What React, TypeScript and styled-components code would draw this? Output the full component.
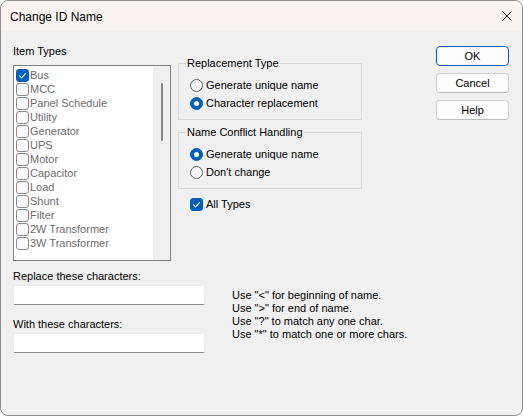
import React from "react";
import styled, { createGlobalStyle } from "styled-components";

const GlobalStyle = createGlobalStyle`
  html, body {
    margin: 0;
    padding: 0;
    background: #ffffff;
  }
  body {
    font-family: "Liberation Sans", Arial, sans-serif;
    font-size: 11px;
    color: #000;
  }
`;

const itemTypes = [
  "Bus",
  "MCC",
  "Panel Schedule",
  "Utility",
  "Generator",
  "UPS",
  "Motor",
  "Capacitor",
  "Load",
  "Shunt",
  "Filter",
  "2W Transformer",
  "3W Transformer",
];

const hints = [
  'Use "<" for beginning of name.',
  'Use ">" for end of name.',
  'Use "?" to match any one char.',
  'Use "*" to match one or more chars.',
];

function App() {
  return (
    <>
      <GlobalStyle />
      <Window>
        <TitleBar>
          <Title>Change ID Name</Title>
          <CloseIcon width="10" height="10" viewBox="0 0 10 10">
            <path d="M0.5 0.5 L9.5 9.5 M9.5 0.5 L0.5 9.5" stroke="#1a1a1a" strokeWidth="1" />
          </CloseIcon>
        </TitleBar>

        <Body>
          <TopRow>
            <LeftColumn>
              <FieldLabel>Item Types</FieldLabel>
              <ListBox>
                <ListItems>
                  {itemTypes.map((name, i) => (
                    <ListRow key={name}>
                      <CheckBox $checked={i === 0}>
                        {i === 0 && <CheckMark />}
                      </CheckBox>
                      <span>{name}</span>
                    </ListRow>
                  ))}
                </ListItems>
                <ScrollTrack>
                  <ScrollThumb />
                </ScrollTrack>
              </ListBox>
            </LeftColumn>

            <MiddleColumn>
              <GroupBox>
                <GroupCaption>Replacement Type</GroupCaption>
                <OptionList>
                  <OptionRow>
                    <Radio $selected={false} />
                    <span>Generate unique name</span>
                  </OptionRow>
                  <OptionRow>
                    <Radio $selected />
                    <span>Character replacement</span>
                  </OptionRow>
                </OptionList>
              </GroupBox>

              <GroupBox $spaced>
                <GroupCaption>Name Conflict Handling</GroupCaption>
                <OptionList>
                  <OptionRow>
                    <Radio $selected />
                    <span>Generate unique name</span>
                  </OptionRow>
                  <OptionRow>
                    <Radio $selected={false} />
                    <span>Don't change</span>
                  </OptionRow>
                </OptionList>
              </GroupBox>

              <AllTypesRow>
                <CheckBox $checked>
                  <CheckMark />
                </CheckBox>
                <span>All Types</span>
              </AllTypesRow>
            </MiddleColumn>

            <ButtonColumn>
              <DialogButton $default>OK</DialogButton>
              <DialogButton>Cancel</DialogButton>
              <DialogButton>Help</DialogButton>
            </ButtonColumn>
          </TopRow>

          <BottomRow>
            <InputColumn>
              <FieldLabel>Replace these characters:</FieldLabel>
              <TextField />
              <FieldLabel $spaced>With these characters:</FieldLabel>
              <TextField />
            </InputColumn>
            <HintText>
              {hints.map((h) => (
                <div key={h}>{h}</div>
              ))}
            </HintText>
          </BottomRow>
        </Body>
      </Window>
    </>
  );
}

function CheckMark() {
  return (
    <svg width="11" height="11" viewBox="0 0 11 11">
      <path d="M2.5 5.8 L4.6 7.8 L8.6 3.4" fill="none" stroke="#fff" strokeWidth="1.1" strokeLinecap="round" strokeLinejoin="round" />
    </svg>
  );
}

const Window = styled.div`
  box-sizing: border-box;
  width: 523px;
  height: 416px;
  border: 1px solid #8e8e8e;
  border-radius: 8px;
  background: #f0f0f0;
  overflow: hidden;
  display: flex;
  flex-direction: column;
`;

const TitleBar = styled.div`
  height: 30px;
  flex-shrink: 0;
  background: #f9f4f1;
  display: flex;
  align-items: center;
  justify-content: space-between;
  padding: 0 10px 0 9px;
`;

const Title = styled.div`
  font-size: 12px;
  color: #000;
  margin-top: 1px;
`;

const CloseIcon = styled.svg`
  display: block;
`;

const Body = styled.div`
  flex: 1;
  padding: 0 13px 0 12px;
  display: flex;
  flex-direction: column;
`;

const TopRow = styled.div`
  display: flex;
  align-items: flex-start;
`;

const LeftColumn = styled.div`
  width: 158px;
  padding-top: 13px;
  display: flex;
  flex-direction: column;
`;

const FieldLabel = styled.div<{ $spaced?: boolean }>`
  height: 14px;
  line-height: 14px;
  margin-top: ${(p) => (p.$spaced ? "12px" : "0")};
  white-space: nowrap;
`;

const ListBox = styled.div`
  box-sizing: border-box;
  margin-top: 7px;
  height: 196px;
  border: 1px solid #828282;
  background: #fff;
  display: flex;
`;

const ListItems = styled.div`
  flex: 1;
  padding: 2px 0 0 2px;
  overflow: hidden;
`;

const ListRow = styled.div`
  height: 14px;
  display: flex;
  align-items: center;
  gap: 1px;
  color: #6d6d6d;
  white-space: nowrap;
`;

const CheckBox = styled.div<{ $checked?: boolean }>`
  box-sizing: border-box;
  width: 13px;
  height: 13px;
  flex-shrink: 0;
  border-radius: 3px;
  border: 1px solid ${(p) => (p.$checked ? "#005fb8" : "#8a8a8a")};
  background: ${(p) => (p.$checked ? "#005fb8" : "#fafafa")};
  display: flex;
  align-items: center;
  justify-content: center;
`;

const ScrollTrack = styled.div`
  width: 17px;
  background: #f0f0f0;
  display: flex;
  justify-content: center;
  padding-top: 17px;
`;

const ScrollThumb = styled.div`
  width: 2px;
  height: 58px;
  border-radius: 1px;
  background: #858585;
`;

const MiddleColumn = styled.div`
  width: 184px;
  margin-left: 7px;
  padding-top: 25px;
  display: flex;
  flex-direction: column;
`;

const GroupBox = styled.fieldset<{ $spaced?: boolean }>`
  margin: ${(p) => (p.$spaced ? "5px" : "0")} 0 0 0;
  padding: 0;
  border: 1px solid #d9d9d9;
  min-inline-size: 0;
`;

const GroupCaption = styled.legend`
  margin-left: 7px;
  padding: 0 1px;
  line-height: 14px;
  font-size: 11px;
  white-space: nowrap;
`;

const OptionList = styled.div`
  padding: 6px 0 7px 11px;
  display: flex;
  flex-direction: column;
`;

const OptionRow = styled.div`
  height: 18px;
  display: flex;
  align-items: center;
  gap: 3px;
  white-space: nowrap;
`;

const Radio = styled.div<{ $selected?: boolean }>`
  box-sizing: border-box;
  width: 13px;
  height: 13px;
  flex-shrink: 0;
  border-radius: 50%;
  border: 1px solid ${(p) => (p.$selected ? "#005fb8" : "#5e5e5e")};
  background: ${(p) => (p.$selected ? "#005fb8" : "#f7f7f7")};
  display: flex;
  align-items: center;
  justify-content: center;

  &::after {
    content: "";
    display: ${(p) => (p.$selected ? "block" : "none")};
    width: 5px;
    height: 5px;
    border-radius: 50%;
    background: #fff;
  }
`;

const AllTypesRow = styled(OptionRow)`
  margin-top: 6px;
  margin-left: 12px;
`;

const ButtonColumn = styled.div`
  margin-left: auto;
  padding-top: 15px;
  display: flex;
  flex-direction: column;
  gap: 7px;
`;

const DialogButton = styled.button<{ $default?: boolean }>`
  box-sizing: border-box;
  width: 73px;
  height: 20px;
  padding: 0;
  font-family: inherit;
  font-size: 11px;
  color: #000;
  background: #fdfdfd;
  border: 1px solid ${(p) => (p.$default ? "#005fb8" : "#d0d0d0")};
  border-bottom-color: ${(p) => (p.$default ? "#005fb8" : "#bcbcbc")};
  border-radius: 4px;
`;

const BottomRow = styled.div`
  display: flex;
  align-items: flex-start;
  margin-top: 8px;
`;

const InputColumn = styled.div`
  width: 192px;
  display: flex;
  flex-direction: column;
`;

const TextField = styled.div`
  box-sizing: border-box;
  margin-top: 2px;
  height: 20px;
  background: #fff;
  border: 1px solid #ececec;
  border-bottom-color: #8a8a8a;
  border-radius: 2px;
`;

const HintText = styled.div`
  margin-left: 27px;
  margin-top: 20px;
  line-height: 13px;
  font-size: 11px;
  white-space: nowrap;
`;

export default App;
